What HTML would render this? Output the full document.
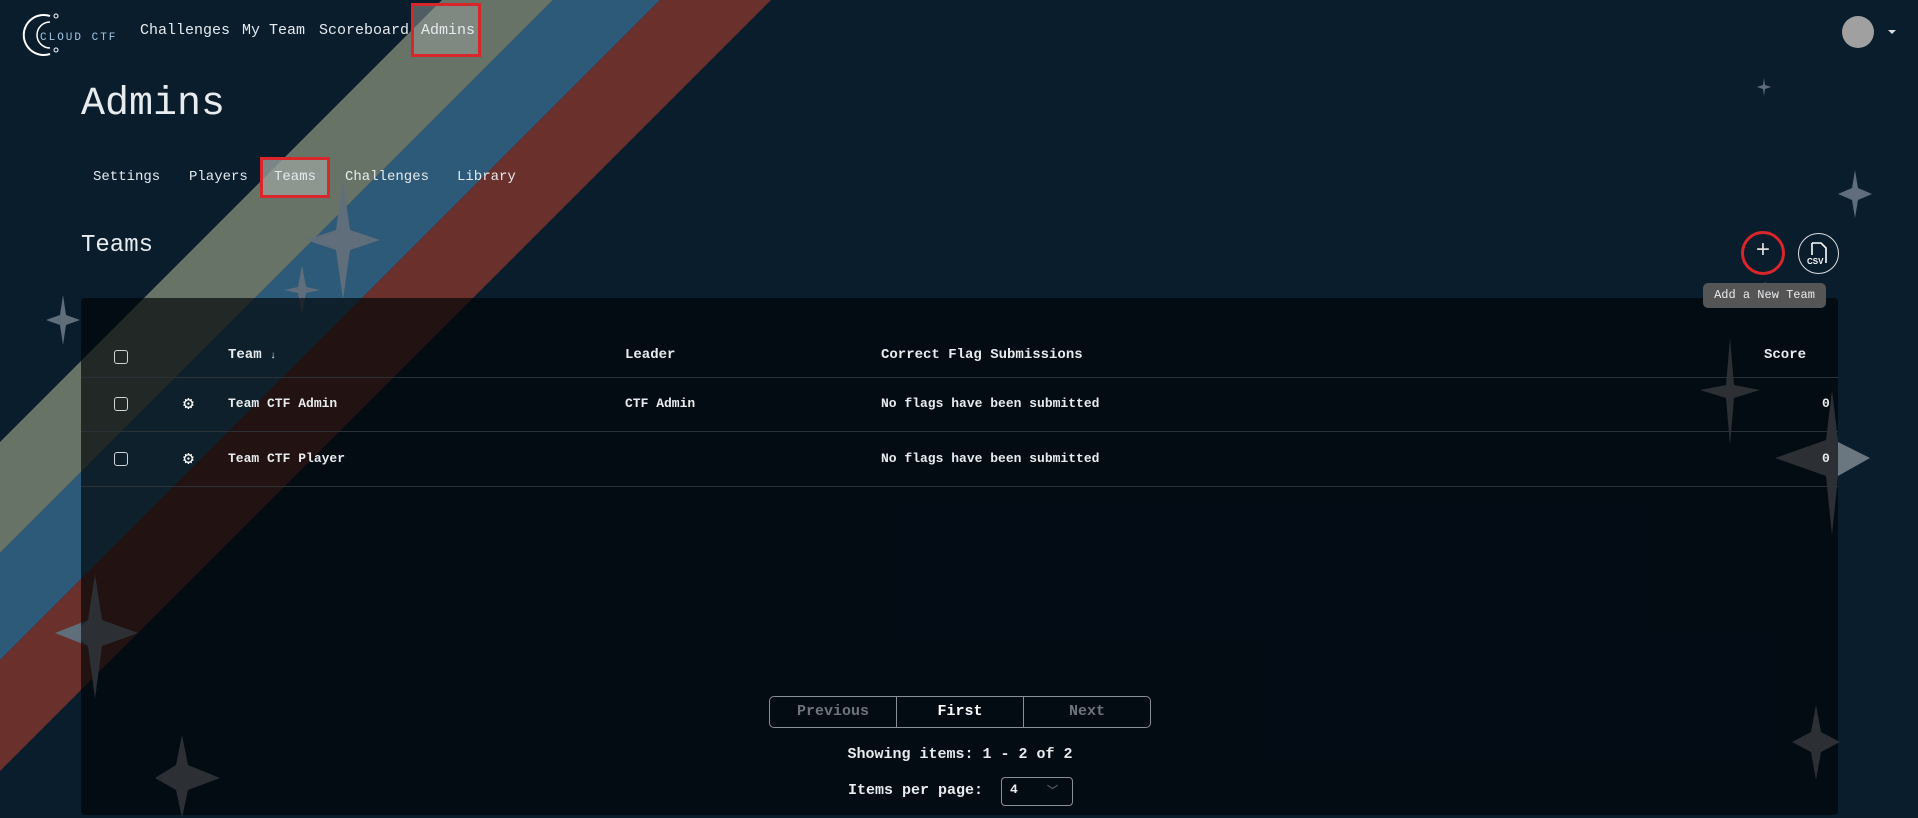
<!DOCTYPE html>
<html><head><meta charset="utf-8"><style>
*{margin:0;padding:0;box-sizing:border-box}
body{width:1918px;height:818px;overflow:hidden;background:#0a1d2d;font-family:"Liberation Mono","DejaVu Sans Mono",monospace;color:#e8ecef;position:relative}
.a{position:absolute}
.nav{font-size:15px;top:22px;color:#e6eaee}
.sub{font-size:14px;top:169px;color:#e6eaee}
.red{border:3px solid #d8262a}
.th{font-weight:bold;font-size:14px;top:347px}
.td{font-size:13px;font-weight:bold}
.cb{width:14px;height:14px;border:1.5px solid #cfd4d8;border-radius:3px}
.line{left:81px;width:1757px;height:1px;background:#2a3137}
</style></head><body>
<svg class="a" style="left:0;top:0" width="1918" height="818">
<polygon points="442,0 553,0 0,553 0,442" fill="#687367"/>
<polygon points="553,0 660,0 0,660 0,553" fill="#2c5a78"/>
<polygon points="660,0 771,0 0,771 0,660" fill="#6a302b"/>
<g fill="#5f6e7a">
<polygon points="343,180 350,230 380,240 350,250 343,300 336,250 306,240 336,230"/>
<polygon points="302,265 306,287 320,290 306,293 302,315 298,293 284,290 298,287"/>
<polygon points="63,295 66,315 80,320 66,325 63,345 60,325 46,320 60,315"/>
<polygon points="1855,170 1858,188 1872,194 1858,200 1855,218 1852,200 1838,194 1852,188"/>
<polygon points="1764,78 1765,85 1771,87 1765,89 1764,96 1763,89 1757,87 1763,85"/>
<polygon points="95,575 102,620 138,633 102,646 95,698 88,646 55,633 88,620"/>
</g>
</svg>
<svg class="a" style="left:20px;top:10px" width="95" height="48">
<path d="M30 6 A20 20 0 1 0 30 44" fill="none" stroke="#fff" stroke-width="2"/>
<path d="M30 12 A13 13 0 1 0 30 38" fill="none" stroke="#fff" stroke-width="1.5"/>
<circle cx="36" cy="6" r="2" fill="none" stroke="#fff"/><circle cx="36" cy="40" r="2" fill="none" stroke="#fff"/>
<text x="20" y="30" font-family="Liberation Mono" font-size="11" fill="#9fc6e3" letter-spacing="2">CLOUD CTF</text>
</svg>
<div class="a nav" style="left:140px">Challenges</div>
<div class="a nav" style="left:242px">My Team</div>
<div class="a nav" style="left:319px">Scoreboard</div>
<div class="a red" style="left:411px;top:3px;width:70px;height:54px;background:rgba(150,160,155,.5)"></div>
<div class="a nav" style="left:421px">Admins</div>
<div class="a" style="left:1842px;top:16px;width:32px;height:32px;border-radius:50%;background:#a0a0a0"></div>
<div class="a" style="left:1888px;top:30px;border:4px solid transparent;border-top-color:#ddd"></div>
<div class="a" style="left:81px;top:82px;font-size:40px;color:#e8ecef">Admins</div>
<div class="a sub" style="left:93px">Settings</div>
<div class="a sub" style="left:189px">Players</div>
<div class="a red" style="left:260px;top:157px;width:70px;height:41px;background:rgba(150,160,155,.8)"></div>
<div class="a sub" style="left:274px">Teams</div>
<div class="a sub" style="left:345px">Challenges</div>
<div class="a sub" style="left:457px">Library</div>
<div class="a" style="left:81px;top:232px;font-size:24px">Teams</div>
<div class="a" style="left:1741px;top:231px;width:44px;height:44px;border-radius:50%;border:3px solid #d8262a;text-align:center;line-height:36px;font-size:24px;color:#ddd">+</div>
<div class="a" style="left:1798px;top:233px;width:41px;height:41px;border-radius:50%;border:1.5px solid #ddd"></div>
<svg class="a" style="left:1806px;top:240px" width="26" height="28"><path d="M6 3h9l5 5v15" fill="none" stroke="#fff" stroke-width="1.6"/><path d="M6 3v12" stroke="#fff" stroke-width="1.6"/><text x="1" y="24" font-family="Liberation Sans" font-weight="bold" font-size="8" fill="#fff">CSV</text></svg>
<div class="a" style="left:81px;top:298px;width:1757px;height:517px;background:rgba(0,4,8,0.68);border-radius:4px"></div>
<svg class="a" style="left:0;top:0" width="1918" height="818"><g fill="#2c3034">
<polygon points="95,575 102,620 138,633 102,646 95,698 88,646 81,640 81,626 88,620"/>
<polygon points="182,735 188,765 220,778 188,790 182,818 176,790 155,778 176,765"/>
<polygon points="1816,705 1821,732 1840,742 1821,752 1816,780 1811,752 1792,742 1811,732"/>
<polygon points="1730,338 1734,385 1760,390 1734,398 1730,445 1726,398 1700,390 1726,385"/>
<polygon points="1832,390 1838,440 1838,440 1838,440 1838,476 1838,476 1832,535 1826,476 1775,458 1826,440"/>
</g><polygon points="1838,442 1870,458 1838,476" fill="#6a7680"/></svg>
<div class="a" style="left:1759px;top:276px;border:6px solid transparent;border-bottom-color:#555"></div>
<div class="a" style="left:1703px;top:283px;width:123px;height:25px;border-radius:5px;background:#555;font-size:12px;line-height:25px;text-align:center">Add a New Team</div>
<div class="a cb" style="left:114px;top:350px"></div>
<div class="a th" style="left:228px">Team <span style="font-size:10px">↓</span></div>
<div class="a th" style="left:625px">Leader</div>
<div class="a th" style="left:881px">Correct Flag Submissions</div>
<div class="a th" style="left:1764px">Score</div>
<div class="a line" style="top:377px"></div>
<div class="a cb" style="left:114px;top:397px"></div>
<div class="a" style="left:183px;top:393px;font-size:18px;color:#fff">⚙</div>
<div class="a td" style="left:228px;top:396px">Team CTF Admin</div>
<div class="a td" style="left:625px;top:396px">CTF Admin</div>
<div class="a td" style="left:881px;top:396px">No flags have been submitted</div>
<div class="a td" style="left:1822px;top:396px">0</div>
<div class="a line" style="top:431px"></div>
<div class="a cb" style="left:114px;top:452px"></div>
<div class="a" style="left:183px;top:448px;font-size:18px;color:#fff">⚙</div>
<div class="a td" style="left:228px;top:451px">Team CTF Player</div>
<div class="a td" style="left:881px;top:451px">No flags have been submitted</div>
<div class="a td" style="left:1822px;top:451px">0</div>
<div class="a line" style="top:486px"></div>
<div class="a" style="left:769px;top:696px;width:382px;height:32px;border:1.5px solid #8a8f94;border-radius:5px;display:flex;font-size:15px;font-weight:bold;line-height:29px;text-align:center">
<div style="flex:1;color:#6d757c;border-right:1.5px solid #8a8f94">Previous</div>
<div style="flex:1;color:#fff;border-right:1.5px solid #8a8f94">First</div>
<div style="flex:1;color:#6d757c">Next</div></div>
<div class="a" style="left:0;width:1918px;top:746px;text-align:center;font-size:15px;font-weight:bold;padding-left:2px">Showing items: 1 - 2 of 2</div>
<div class="a" style="left:848px;top:782px;font-size:15px;font-weight:bold">Items per page:</div>
<div class="a" style="left:1001px;top:777px;width:72px;height:29px;border:1.5px solid #8a8f94;border-radius:4px;font-size:13px;font-weight:bold;padding:4px 8px">4<span style="position:absolute;left:45px;top:4px;color:#555;font-size:11px">﹀</span></div>
</body></html>
